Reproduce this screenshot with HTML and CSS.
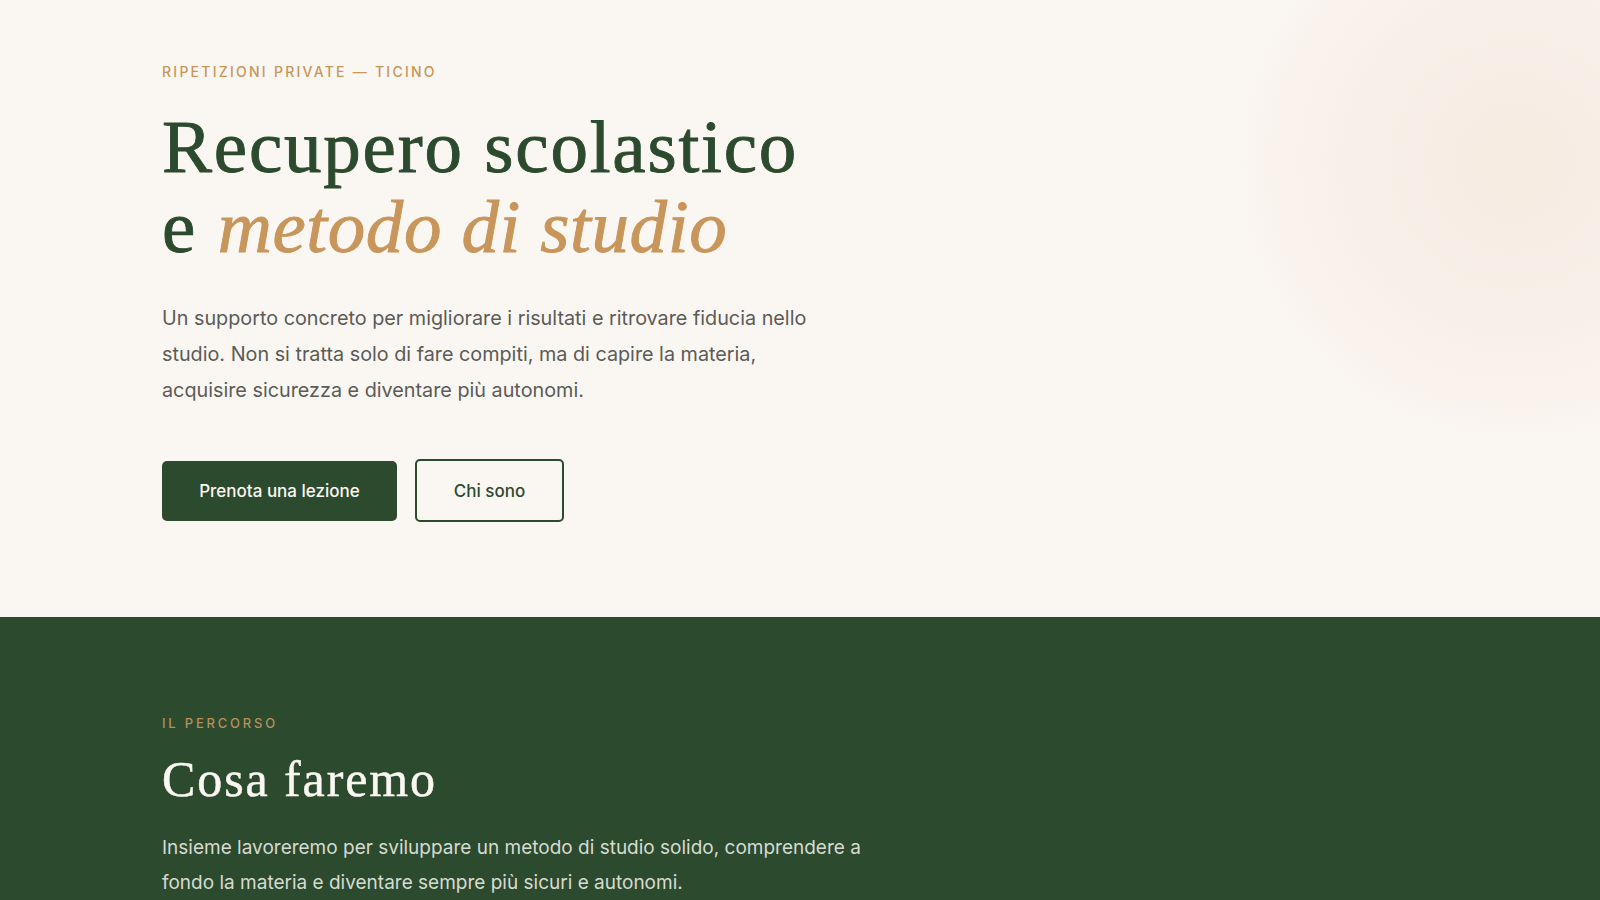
FILE: index.html
```html
<!DOCTYPE html>
<html lang="it">
<head>
<meta charset="utf-8">
<title>Ripetizioni private — Ticino</title>
<link rel="stylesheet" href="styles.css">
</head>
<body>
<section class="hero">
  <div class="container">
    <p class="eyebrow">Ripetizioni private — Ticino</p>
    <h1 class="hero-title">Recupero scolastico<br>e <em>metodo di studio</em></h1>
    <p class="hero-text">Un supporto concreto per migliorare i risultati e ritrovare fiducia nello studio. Non si tratta solo di fare compiti, ma di capire la materia, acquisire sicurezza e diventare più autonomi.</p>
    <div class="actions">
      <a class="btn btn-primary" href="#">Prenota una lezione</a>
      <a class="btn btn-outline" href="#">Chi sono</a>
    </div>
  </div>
</section>
<section class="path">
  <div class="container">
    <p class="eyebrow eyebrow-dark">Il percorso</p>
    <h2 class="section-title">Cosa faremo</h2>
    <p class="section-text">Insieme lavoreremo per sviluppare un metodo di studio solido, comprendere a fondo la materia e diventare sempre più sicuri e autonomi.</p>
  </div>
</section>
</body>
</html>
```

FILE: styles.css
```css
* { box-sizing: border-box; }
html, body { margin: 0; padding: 0; }
body {
  background: #faf7f2;
  font-family: Inter, "Noto Sans", sans-serif;
  color: #5b5b57;
}
.container {
  padding: 0 162px;
}
.hero {
  background:
    radial-gradient(circle 300px at 1515px 163px, #f5ebe0 0%, #f7ede5 25%, #f8efe8 55%, #f9f3ee 80%, rgba(250,247,242,0) 100%),
    #faf7f2;
  padding: 64px 0 0;
  height: 617px;
}
.eyebrow {
  margin: 0;
  font-size: 14px;
  line-height: 16px;
  font-weight: 500;
  letter-spacing: 2.25px;
  text-transform: uppercase;
  color: #c8955a;
}
.hero-title {
  margin: 27px 0 0;
  font-family: "Liberation Serif", "Times New Roman", serif;
  font-weight: 400;
  font-size: 75px;
  line-height: 80px;
  letter-spacing: 1.8px;
  -webkit-text-stroke: 0.9px currentColor;
  color: #2c4a2e;
}
.hero-title em {
  font-style: italic;
  letter-spacing: 0.6px;
  color: #c8955a;
}
.hero-text {
  margin: 33px 0 0;
  max-width: 660px;
  font-size: 19.8px;
  line-height: 36px;
  color: #5b5b57;
}
.actions {
  margin-top: 51px;
  display: flex;
  align-items: center;
  gap: 18px;
}
.btn {
  display: inline-flex;
  align-items: center;
  justify-content: center;
  text-decoration: none;
  font-size: 17px;
  font-weight: 500;
  border-radius: 5px;
}
.btn-primary {
  width: 235px;
  height: 60px;
  background: #2c4a2e;
  color: #faf7f2;
}
.btn-outline {
  width: 149px;
  height: 63px;
  border: 2px solid #2c4a2e;
  color: #2c4a2e;
  background: transparent;
}
.path {
  background: #2c4a2e;
  padding: 98px 0 80px;
  min-height: 283px;
}
.eyebrow-dark {
  font-size: 13px;
  letter-spacing: 2.8px;
  color: #b88f5c;
}
.section-title {
  margin: 20px 0 0;
  font-family: "Liberation Serif", "Times New Roman", serif;
  font-weight: 400;
  font-size: 50px;
  line-height: 56px;
  letter-spacing: 1.9px;
  -webkit-text-stroke: 0.5px currentColor;
  color: #faf7f2;
}
.section-text {
  margin: 23px 0 0;
  max-width: 710px;
  font-size: 19px;
  line-height: 35px;
  color: #d6dbd2;
}
```
